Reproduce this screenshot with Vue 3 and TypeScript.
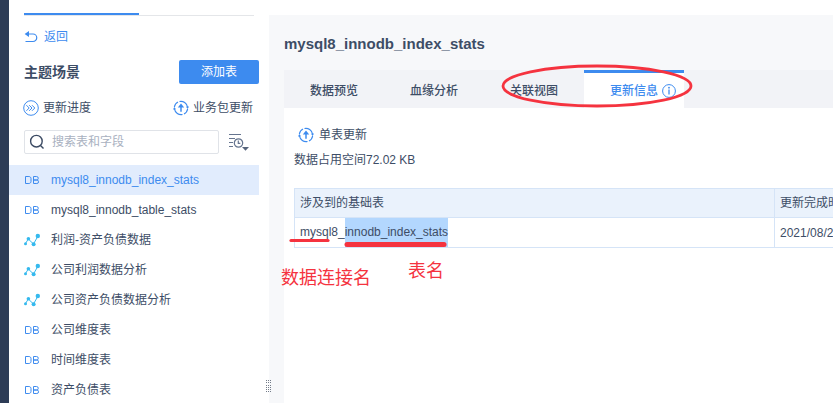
<script setup lang="ts">
import { ref } from 'vue'

interface Item {
  name: string
  kind: 'db' | 'flow'
}

const items: Item[] = [
  { name: 'mysql8_innodb_index_stats', kind: 'db' },
  { name: 'mysql8_innodb_table_stats', kind: 'db' },
  { name: '利润-资产负债数据', kind: 'flow' },
  { name: '公司利润数据分析', kind: 'flow' },
  { name: '公司资产负债数据分析', kind: 'flow' },
  { name: '公司维度表', kind: 'db' },
  { name: '时间维度表', kind: 'db' },
  { name: '资产负债表', kind: 'db' },
]
const tabs: string[] = ['数据预览', '血缘分析', '关联视图', '更新信息']

const selected = ref(0)
const activeTab = ref(3)
const keyword = ref('')
</script>

<template>
  <div class="shell">
    <div class="rail"></div>
    <aside class="side">
      <div class="progress"><span class="progress-on"></span></div>
      <a class="back" href="#">
        <svg width="14" height="14" viewBox="0 0 14 14" fill="none" stroke="currentColor">
          <path d="M3 4h6a3.6 3.6 0 0 1 0 7.5H1.5" stroke-width="1.2" />
          <path d="M.6 4l4.4-3v6z" fill="currentColor" stroke="none" />
        </svg>
        <span>返回</span>
      </a>
      <div class="head">
        <h2>主题场景</h2>
        <button class="add" type="button">添加表</button>
      </div>
      <div class="tools">
        <button class="tool" type="button">
          <svg width="16" height="16" viewBox="0 0 16 16" fill="none" stroke="#3d8bef">
            <circle cx="8" cy="8" r="7.3" />
            <path d="M3.4 5.2L6.2 8l-2.8 2.8M6.2 5.2L9 8l-2.8 2.8M9 5.2L11.8 8 9 10.8" />
          </svg>
          <span>更新进度</span>
        </button>
        <button class="tool" type="button">
          <svg width="16" height="16" viewBox="0 0 16 16" fill="none" stroke="#3d8bef">
            <path d="M1.4 7A6.7 6.7 0 0 1 5 2M6.5 1.5A6.7 6.7 0 0 1 14.5 7M14.6 9A6.7 6.7 0 0 1 11 14M9.5 14.5A6.7 6.7 0 0 1 1.5 9" stroke-width="1.2" />
            <path d="M8 11.8V6" stroke-width="1.5" />
            <path d="M8 3.6l3.2 3.8H4.8zM0 9.5l1.3-2.6L3 9.3zM13 6.7l3-.2-1.3 2.6z" fill="#3d8bef" stroke="none" />
          </svg>
          <span>业务包更新</span>
        </button>
      </div>
      <div class="filter">
        <label class="search">
          <svg width="16" height="16" viewBox="0 0 16 16" fill="none" stroke="#3b4a63" stroke-width="1.4">
            <circle cx="7.4" cy="7.2" r="5.8" />
            <path d="M11.5 11.4l3 3" />
          </svg>
          <input v-model="keyword" type="text" placeholder="搜索表和字段" aria-label="搜索表和字段" />
        </label>
        <button class="sort" type="button" aria-label="排序">
          <svg width="20" height="18" viewBox="0 0 20 18" fill="none" stroke="#66758f" stroke-width="1.2">
            <path d="M0 1.5h12M0 5.5h6M0 9.5h4M0 13.5h4" />
            <circle cx="9.5" cy="10" r="4.2" />
            <path d="M9.3 7.5v2.8h2" />
            <path d="M13 14h7l-3.5 3.7z" fill="#56647c" stroke="none" />
          </svg>
        </button>
      </div>
      <ul class="list">
        <li v-for="(item, i) in items" :key="item.name">
          <button
            type="button"
            class="item"
            :class="{ on: i === selected }"
            @click="selected = i"
          >
            <svg v-if="item.kind === 'db'" width="16" height="16" viewBox="0 0 16 16" fill="none" stroke="#3d8bef" stroke-width="1">
              <path d="M1.5 4.5h3.4c1.2 0 2.1.9 2.1 2.1v2.8c0 1.2-.9 2.1-2.1 2.1H1.5zM9.5 4.5h3a1.7 1.7 0 0 1 0 3.5h-3zM9.5 8h3.3a1.7 1.7 0 0 1 0 3.5H9.5z" />
            </svg>
            <svg v-else width="16" height="16" viewBox="0 0 16 16" fill="#35b9ee" stroke="#35b9ee">
              <path d="M1.5 11.5L4.3 7l5.2 5L14 4" fill="none" />
              <g stroke="none">
                <circle cx="1.5" cy="11.7" r="1.5" />
                <circle cx="4.4" cy="6.8" r="1.8" />
                <circle cx="9.6" cy="12.2" r="2" />
                <circle cx="13.8" cy="4" r="2.2" />
              </g>
            </svg>
            <span>{{ item.name }}</span>
          </button>
        </li>
      </ul>
      <svg class="grip" width="6" height="13" viewBox="0 0 6 13" fill="#737b88">
        <path d="M0 0h1v1H0zM2 0h1v1H2zM4 0h1v1H4zM0 2h1v1H0zM2 2h1v1H2zM4 2h1v1H4zM0 5h1v1H0zM2 5h1v1H2zM4 5h1v1H4zM0 7h1v1H0zM2 7h1v1H2zM4 7h1v1H4zM0 9h1v1H0zM2 9h1v1H2zM4 9h1v1H4zM0 11h1v1H0zM2 11h1v1H2zM4 11h1v1H4z" />
      </svg>
    </aside>
    <main class="main">
      <h1>mysql8_innodb_index_stats</h1>
      <div class="card">
        <nav class="tabs">
          <button
            v-for="(tab, i) in tabs"
            :key="tab"
            type="button"
            class="tab"
            :class="{ active: i === activeTab }"
            @click="activeTab = i"
          >
            <span>{{ tab }}</span>
            <svg v-if="i === activeTab" width="14" height="14" viewBox="0 0 14 14" fill="none" stroke="#3d8bef">
              <circle cx="7" cy="7" r="6.4" />
              <path d="M7 5.6v5" stroke-width="1.3" />
              <circle cx="7" cy="3.7" r=".9" fill="#3d8bef" stroke="none" />
            </svg>
          </button>
        </nav>
        <div class="body">
          <button class="tool single" type="button">
            <svg width="16" height="16" viewBox="0 0 16 16" fill="none" stroke="#3d8bef">
              <path d="M1.4 7A6.7 6.7 0 0 1 5 2M6.5 1.5A6.7 6.7 0 0 1 14.5 7M14.6 9A6.7 6.7 0 0 1 11 14M9.5 14.5A6.7 6.7 0 0 1 1.5 9" stroke-width="1.2" />
              <path d="M8 11.8V6" stroke-width="1.5" />
              <path d="M8 3.6l3.2 3.8H4.8zM0 9.5l1.3-2.6L3 9.3zM13 6.7l3-.2-1.3 2.6z" fill="#3d8bef" stroke="none" />
            </svg>
            <span>单表更新</span>
          </button>
          <p class="space">数据占用空间72.02 KB</p>
          <table>
            <thead>
              <tr><th class="base">涉及到的基础表</th><th>更新完成时</th></tr>
            </thead>
            <tbody>
              <tr><td>mysql8_<mark>innodb_index_stats</mark></td><td>2021/08/2</td></tr>
            </tbody>
          </table>
        </div>
      </div>
    </main>
    <div class="notes">
      <svg width="833" height="403" viewBox="0 0 833 403" fill="none" stroke="#f5333f" stroke-linecap="round">
        <ellipse cx="597" cy="86" rx="94" ry="20" stroke-width="2.8" />
        <path d="M291 240.5h37" stroke-width="3.2" />
        <path d="M347 244.5h97" stroke-width="5" />
      </svg>
      <span class="note source">数据连接名</span>
      <span class="note name">表名</span>
    </div>
  </div>
</template>

<style>
body {
  margin: 0;
  background: #fff;
}
</style>

<style scoped>
.shell {
  position: relative;
  display: flex;
  height: 100vh;
  overflow: hidden;
  color: #3d4d66;
  font: 12px/20px "Liberation Sans", "Noto Sans CJK SC", sans-serif;
}
button {
  padding: 0;
  border: 0;
  background: none;
  color: inherit;
  font: inherit;
  text-align: left;
  cursor: pointer;
}
svg {
  flex: none;
  display: block;
}
.rail {
  flex: none;
  width: 9px;
  background: #2d3c56;
}
.side {
  position: relative;
  flex: none;
  width: 260px;
  box-sizing: border-box;
  padding: 13px 10px 0 0;
}
.progress {
  height: 2px;
  margin: 0 5px 0 15px;
  border-bottom: 1px solid #e4e6e9;
}
.progress-on {
  display: block;
  width: 50%;
  height: 2px;
  background: #3d8bef;
}
.back {
  display: flex;
  align-items: center;
  gap: 6px;
  margin: 11px 0 0 15px;
  color: #3d8bef;
  text-decoration: none;
}
.head {
  display: flex;
  align-items: center;
  justify-content: space-between;
  margin: 13px 0 0 15px;
}
h2 {
  margin: 0;
  font-size: 14px;
  font-weight: 700;
}
.add {
  width: 80px;
  height: 24px;
  border-radius: 2px;
  background: #3d8bef;
  color: #fff;
  text-align: center;
}
.tools {
  display: flex;
  justify-content: space-between;
  margin: 14px 6px 0 14px;
}
.tool {
  display: flex;
  align-items: center;
  gap: 4px;
}
.filter {
  display: flex;
  align-items: center;
  gap: 10px;
  margin: 12px 0 0 15px;
}
.search {
  display: flex;
  align-items: center;
  gap: 7px;
  flex: 1;
  height: 24px;
  box-sizing: border-box;
  padding: 0 4px;
  border: 1px solid #e0e3e8;
  border-radius: 2px;
}
.search input {
  flex: 1;
  min-width: 0;
  padding: 0;
  border: 0;
  outline: 0;
  background: none;
  color: inherit;
  font: inherit;
}
.search input::placeholder {
  color: #a9b1bf;
  opacity: 1;
}
.sort {
  width: 30px;
}
.list {
  margin: 11px 0 0;
  padding: 0;
  list-style: none;
}
.item {
  display: flex;
  align-items: center;
  gap: 11px;
  width: 100%;
  height: 30px;
  padding: 0 15px;
}
.item.on {
  background: #e1ecfd;
  color: #3d8bef;
}
.grip {
  position: absolute;
  right: -3px;
  bottom: 10px;
}
.main {
  flex: 1;
  min-width: 0;
  margin-top: 15px;
  padding-left: 15px;
  background: #f7f8fa;
  display: flex;
  flex-direction: column;
}
h1 {
  margin: 19px 0 16px;
  font-size: 15px;
  line-height: 20px;
}
.card {
  flex: 1;
  background: #fff;
}
.tabs {
  display: flex;
  background: #f2f3f7;
}
.tab {
  display: flex;
  align-items: center;
  gap: 4px;
  width: 100px;
  height: 38px;
  box-sizing: border-box;
  padding: 3px 0 0 26px;
  font-weight: 500;
}
.tab.active {
  padding-top: 0;
  border-top: 3px solid #3d8bef;
  background: #fff;
  color: #3d8bef;
}
.tab span {
  flex: none;
}
.body {
  padding: 17px 0 0 10px;
  overflow: hidden;
}
.single {
  margin-left: 4px;
  gap: 5px;
}
.space {
  margin: 5px 0 18px;
}
table {
  width: 100%;
  border-collapse: collapse;
  table-layout: fixed;
}
th,
td {
  height: 29px;
  box-sizing: border-box;
  padding: 0 0 0 5px;
  border: 1px solid #d5e4f7;
  border-right: 0;
  font-weight: 400;
  text-align: left;
  white-space: nowrap;
  overflow: hidden;
}
th {
  background: #eaf2fc;
}
.base {
  width: 480px;
}
mark {
  display: inline-block;
  height: 29px;
  line-height: 29px;
  background: #b3d7fe;
  color: inherit;
  vertical-align: middle;
}
.notes {
  position: absolute;
  inset: 0;
  pointer-events: none;
}
.note {
  position: absolute;
  color: #f5333f;
  font-size: 18px;
  line-height: 24px;
}
.source {
  left: 281px;
  top: 266px;
}
.name {
  left: 408px;
  top: 259px;
}
</style>
